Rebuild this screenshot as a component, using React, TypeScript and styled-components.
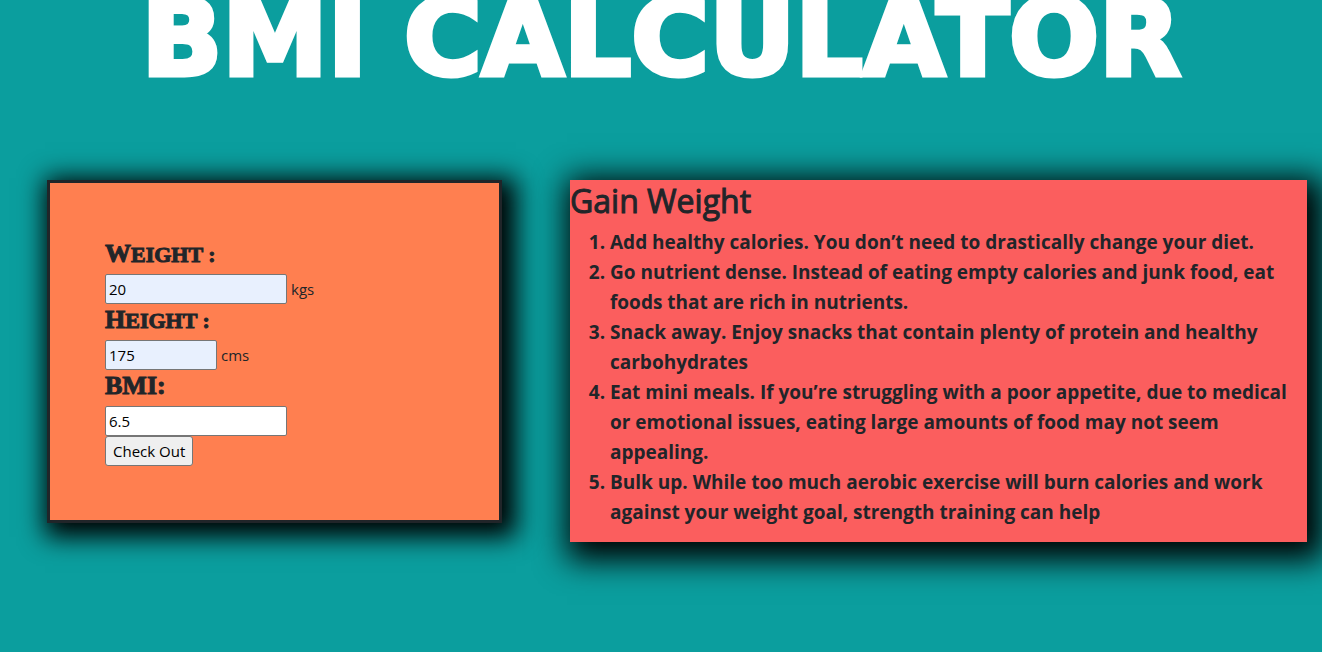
import React, { useState } from "react";
import styled, { createGlobalStyle } from "styled-components";

const GlobalStyle = createGlobalStyle`
  *, *::before, *::after { box-sizing: border-box; }
  body {
    margin: 0;
    background: #0b9e9e;
    color: #212529;
    font-family: "Open Sans", "Noto Sans", sans-serif;
    font-size: 16px;
    line-height: 24px;
  }
`;

const Page = styled.main`
  display: flex;
  flex-direction: column;
  min-height: 100vh;
  overflow: hidden;
`;

const Title = styled.h1`
  margin: -28px 0 74px;
  color: #fff;
  font-family: "DejaVu Sans", sans-serif;
  font-size: 106px;
  font-weight: 700;
  line-height: 134px;
  text-align: center;
  white-space: nowrap;
  -webkit-text-stroke: 5px #fff;
`;

const Columns = styled.div`
  display: grid;
  grid-template-columns: 455fr 737fr;
  column-gap: 68px;
  align-items: start;
  padding: 0 15px 0 47px;
`;

const FormCard = styled.form`
  padding: 55px 55px 54px;
  background: #ff7f50;
  border: 3px solid #212529;
  box-shadow: 6px 6px 24px 8px #000;
`;

const Label = styled.label`
  display: block;
  height: 36px;
  font-family: "Liberation Serif", serif;
  font-size: 22px;
  font-weight: 700;
  line-height: 32px;
  text-transform: uppercase;
  -webkit-text-stroke: 1px #212529;

  &::first-letter {
    font-size: 26px;
  }
`;

const AcronymLabel = styled(Label)`
  font-size: 26px;
`;

const Field = styled.div`
  display: flex;
  align-items: center;
  gap: 4px;
  font-size: 15px;
`;

const Input = styled.input<{ $width: number; $filled?: boolean }>`
  width: ${(p) => p.$width}px;
  height: 30px;
  padding: 1px 3px;
  border: 1px solid #767676;
  border-radius: 2px;
  background: ${(p) => (p.$filled ? "#e8f0fe" : "#fff")};
  color: #000;
  font: inherit;
`;

const Button = styled.button`
  display: block;
  height: 30px;
  padding: 1px 7px;
  border: 1px solid #767676;
  border-radius: 3px;
  background: #efefef;
  color: #000;
  font: inherit;
`;

const AdviceCard = styled.section`
  padding-bottom: 15px;
  background: #fb5e5e;
  box-shadow: 7px 8px 30px 10px #000;
`;

const AdviceTitle = styled.h2`
  margin: 0 0 5px;
  font-size: 32px;
  font-weight: 500;
  line-height: 42px;
  -webkit-text-stroke: 1px #212529;
`;

const AdviceList = styled.ol`
  margin: 0;
  padding: 0 8px 0 40px;
  font-size: 19px;
  font-weight: 700;
  line-height: 30px;
`;

const advice = [
  "Add healthy calories. You don’t need to drastically change your diet.",
  "Go nutrient dense. Instead of eating empty calories and junk food, eat foods that are rich in nutrients.",
  "Snack away. Enjoy snacks that contain plenty of protein and healthy carbohydrates",
  "Eat mini meals. If you’re struggling with a poor appetite, due to medical or emotional issues, eating large amounts of food may not seem appealing.",
  "Bulk up. While too much aerobic exercise will burn calories and work against your weight goal, strength training can help",
];

export default function App() {
  const [weight, setWeight] = useState("20");
  const [height, setHeight] = useState("175");
  const [bmi, setBmi] = useState("6.5");

  const calculate = (e: React.FormEvent) => {
    e.preventDefault();
    const metres = Number(height) / 100;
    setBmi((Number(weight) / (metres * metres)).toFixed(1));
  };

  return (
    <Page>
      <GlobalStyle />
      <Title>BMI CALCULATOR</Title>
      <Columns>
        <FormCard onSubmit={calculate}>
          <Label htmlFor="weight">Weight :</Label>
          <Field>
            <Input id="weight" $width={182} $filled value={weight} onChange={(e) => setWeight(e.target.value)} />
            <span>kgs</span>
          </Field>
          <Label htmlFor="height">Height :</Label>
          <Field>
            <Input id="height" $width={112} $filled value={height} onChange={(e) => setHeight(e.target.value)} />
            <span>cms</span>
          </Field>
          <AcronymLabel htmlFor="bmi">BMI:</AcronymLabel>
          <Field>
            <Input id="bmi" $width={182} value={bmi} readOnly />
          </Field>
          <Field>
            <Button type="submit">Check Out</Button>
          </Field>
        </FormCard>
        <AdviceCard>
          <AdviceTitle>Gain Weight</AdviceTitle>
          <AdviceList>
            {advice.map((item) => (
              <li key={item}>{item}</li>
            ))}
          </AdviceList>
        </AdviceCard>
      </Columns>
    </Page>
  );
}
